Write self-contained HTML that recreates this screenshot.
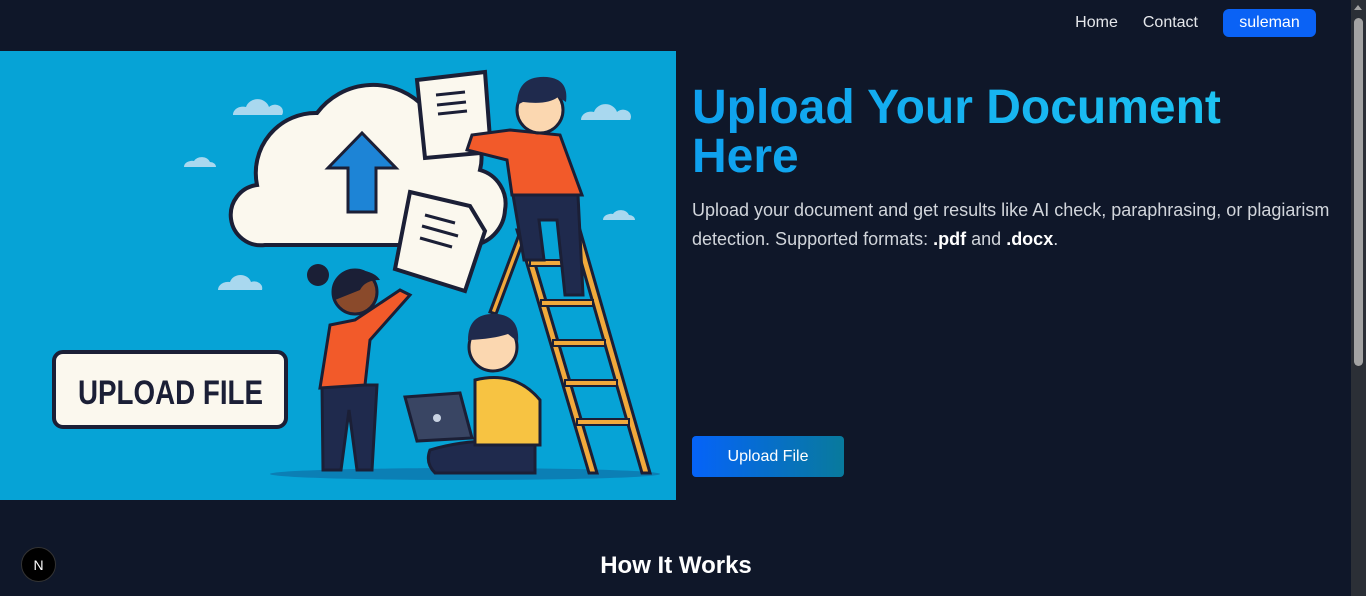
<!DOCTYPE html>
<html><head><meta charset="utf-8"><style>
*{margin:0;padding:0;box-sizing:border-box}
html,body{width:1366px;height:596px;overflow:hidden;background:#0f1729;font-family:"Liberation Sans",Arial,sans-serif}
.nav{position:absolute;top:9px;right:50px;display:flex;align-items:center}
.nav a{color:#e5e7eb;font-size:16px;margin-right:25px;text-decoration:none}
.btn{background:#0a62f5;color:#fff;font-size:16px;width:93px;height:28px;border-radius:6px;display:flex;align-items:center;justify-content:center}
.sb{position:absolute;right:0;top:0;width:15px;height:596px;background:#2b2f36}
.sb div{position:absolute;left:3px;top:18px;width:9px;height:348px;background:#a3a3a3;border-radius:5px}
.sb:before{content:"";position:absolute;left:3px;top:5px;border:4px solid transparent;border-bottom:5px solid #a3a3a3;border-top:0}
h1{position:absolute;left:692px;top:83px;font-size:48px;line-height:49px;font-weight:bold;background:linear-gradient(90deg,#0ea0ee,#1dc3f2);-webkit-background-clip:text;color:transparent;white-space:nowrap}
p{position:absolute;left:692px;top:196px;width:655px;font-size:18px;line-height:29px;color:#d1d5db}
p b{color:#fff}
.up{position:absolute;left:692px;top:436px;width:152px;height:41px;border-radius:4px;background:linear-gradient(90deg,#0563f9,#087a9c);color:#fff;font-size:16px;display:flex;align-items:center;justify-content:center}
h2{position:absolute;left:0;width:1352px;text-align:center;top:552px;font-size:24px;color:#fff;font-weight:bold}
.n{position:absolute;left:21px;top:547px;width:35px;height:35px;border-radius:50%;background:#000;color:#fff;font-size:14px;display:flex;align-items:center;justify-content:center;border:1px solid #333}
</style></head><body>
<div class="nav"><a>Home</a><a>Contact</a><div class="btn">suleman</div></div>
<div class="sb"><div></div></div>
<svg style="position:absolute;left:0;top:51px" width="676" height="449" viewBox="0 51 676 449">
<rect x="0" y="51" width="676" height="449" fill="#06a3d6"/>
<g fill="#a9d8ef">
<path d="M233 115a10 8 0 0 1 13-8a12 11 0 0 1 23 0a8 7 0 0 1 13 8z"/>
<path d="M184 167a8 6 0 0 1 10-6a9 8 0 0 1 16 1a6 5 0 0 1 6 5z"/>
<path d="M581 120a10 8 0 0 1 13-8a12 11 0 0 1 23 0a8 7 0 0 1 13 8z"/>
<path d="M603 220a8 6 0 0 1 10-6a9 8 0 0 1 16 1a6 5 0 0 1 6 5z"/>
<path d="M218 290a10 8 0 0 1 12-8a11 10 0 0 1 21 0a8 7 0 0 1 11 8z"/>
</g>
<ellipse cx="465" cy="474" rx="195" ry="6" fill="#0b7fb5"/>
<path d="M265 245a30 30 0 0 1 -8-60a60 60 0 0 1 60-72a70 70 0 0 1 108-5a50 50 0 0 1 55 62a35 35 0 0 1 25 40a38 38 0 0 1 -30 35z" fill="#fbf8ee" stroke="#1b1f36" stroke-width="4"/>
<path d="M362 133l-34 35h20v44h28v-44h20z" fill="#1d84d6" stroke="#1b1f36" stroke-width="3"/>
<g stroke="#1b1f36" stroke-width="4" fill="#fbf8ee">
<path d="M417 80l68-8l6 80l-66 6z"/>
<path d="M410 192l60 14l15 25l-20 60l-70-22z"/>
</g>
<g stroke="#1b1f36" stroke-width="3"><line x1="436" y1="95" x2="465" y2="92"/><line x1="437" y1="105" x2="466" y2="102"/><line x1="438" y1="114" x2="467" y2="111"/>
<line x1="425" y1="215" x2="455" y2="223"/><line x1="422" y1="226" x2="458" y2="236"/><line x1="420" y1="238" x2="452" y2="247"/></g>
<g stroke="#1b1f36" stroke-width="3" fill="#f2a93b">
<path d="M517 230l8 0l72 243l-8 0z"/><path d="M572 230l8 0l70 243l-8 0z"/>
<path d="M520 232l-30 80l6 2l30-80z"/>
</g>
<g fill="#f2a93b" stroke="#1b1f36" stroke-width="2"><rect x="530" y="260" width="50" height="6"/><rect x="541" y="300" width="52" height="6"/><rect x="553" y="340" width="52" height="6"/><rect x="565" y="380" width="52" height="6"/><rect x="577" y="419" width="52" height="6"/></g>
<path d="M513 195h65l5 100h-18l-8-75h-18l5 40h-20z" fill="#1f2a4d" stroke="#1b1f36" stroke-width="3"/>
<path d="M510 130l50 5l22 60h-70l-5-35l-40-10l5-15z" fill="#f25a2a" stroke="#1b1f36" stroke-width="3"/>
<circle cx="540" cy="110" r="23" fill="#fbd7b0" stroke="#1b1f36" stroke-width="3"/>
<path d="M517 105q0-30 30-28q22 2 19 25l-8-5q-10 8-35 5z" fill="#1f2a4d"/>
<path d="M322 385h55l-5 85h-15l-8-60l-8 60h-18z" fill="#1f2a4d" stroke="#1b1f36" stroke-width="3"/>
<path d="M330 325l25-5l45-30l10 5l-40 45l-5 45l-45 3z" fill="#f25a2a" stroke="#1b1f36" stroke-width="3"/>
<circle cx="355" cy="292" r="22" fill="#8a4a2b" stroke="#1b1f36" stroke-width="3"/>
<path d="M335 300q-5-30 25-30q15 2 20 10q-15 0-20 10z" fill="#1b1f36"/><circle cx="318" cy="275" r="11" fill="#1b1f36"/>
<path d="M430 450q50-15 105-5v28h-100q-10-10-5-23z" fill="#1f2a4d" stroke="#1b1f36" stroke-width="3"/>
<path d="M475 380q40-10 65 20v45h-65z" fill="#f7c342" stroke="#1b1f36" stroke-width="3"/>
<circle cx="493" cy="347" r="24" fill="#fbd7b0" stroke="#1b1f36" stroke-width="3"/>
<path d="M468 340q0-28 30-26q22 3 20 28l-10-8q-15 5-40 6z" fill="#1f2a4d"/>
<path d="M405 397l55-4l12 45l-55 3z" fill="#394563" stroke="#1b1f36" stroke-width="3"/>
<circle cx="437" cy="418" r="4" fill="#c9d3e3"/>
<rect x="54" y="352" width="232" height="75" rx="9" fill="#fbf8ee" stroke="#1b1f36" stroke-width="4"/>
<text x="78" y="404" font-family="Liberation Sans,sans-serif" font-weight="bold" font-size="34" fill="#1b1f36" textLength="185" lengthAdjust="spacingAndGlyphs">UPLOAD FILE</text>
</svg>
<h1>Upload Your Document<br>Here</h1>
<p>Upload your document and get results like AI check, paraphrasing, or plagiarism detection. Supported formats: <b>.pdf</b> and <b>.docx</b>.</p>
<div class="up">Upload File</div>
<h2>How It Works</h2>
<div class="n">N</div>
</body></html>
